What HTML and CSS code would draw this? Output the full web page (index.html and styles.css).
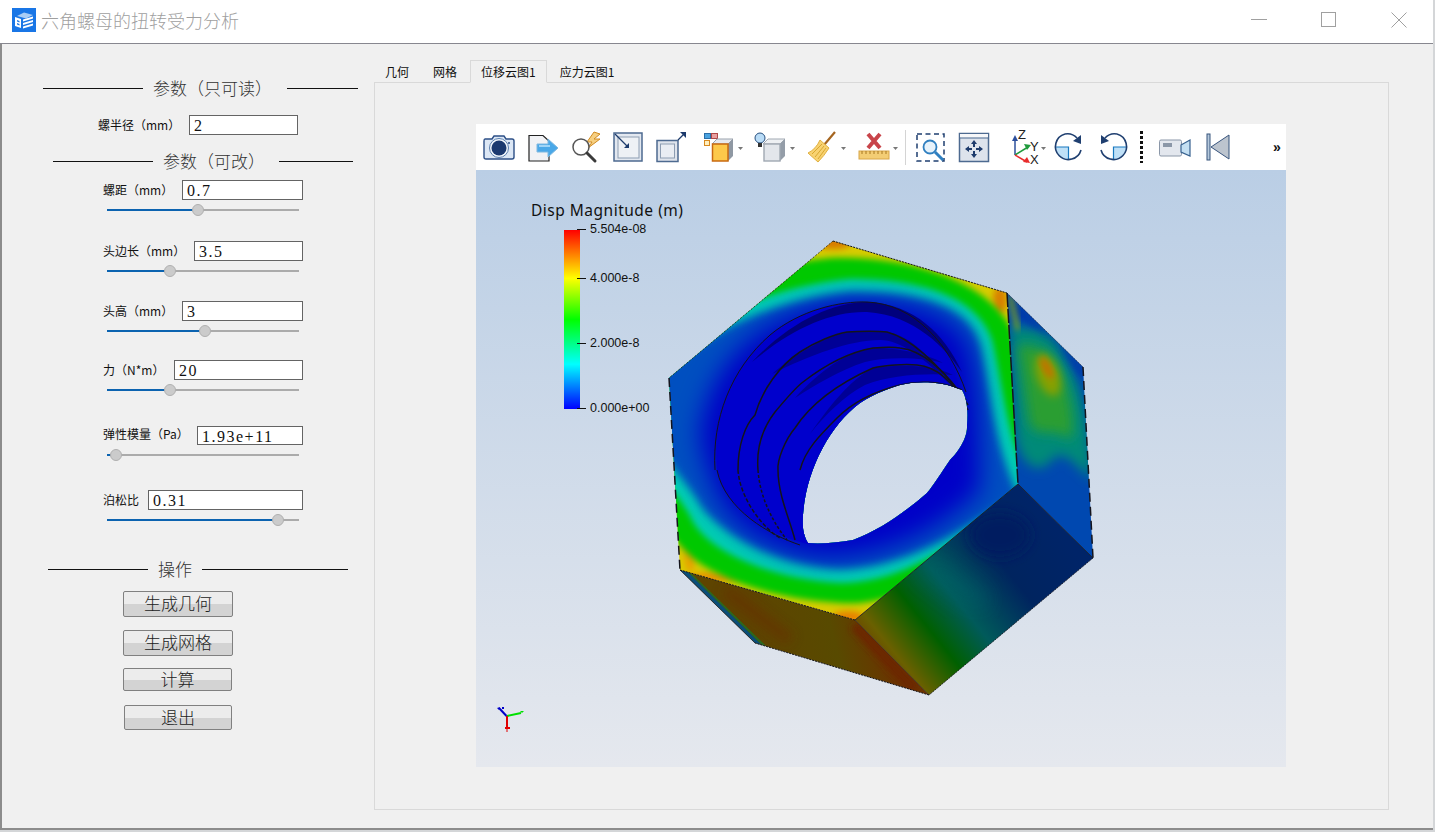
FILE: index.html
```html
<!DOCTYPE html>
<html lang="zh">
<head>
<meta charset="utf-8">
<title>六角螺母的扭转受力分析</title>
<link rel="stylesheet" href="styles.css">
</head>
<body>
<div class="window">
  <header class="titlebar">
    <svg class="app-icon" viewBox="0 0 24 24" width="24" height="24">
      <rect width="24" height="24" fill="#1976e6"/>
      <path d="M5 8 L12 4.5 L21 7 L14 10.5 Z" fill="#a9cdf5"/>
      <path d="M3 9 L9 11 V20 L3 18 Z" fill="#fff"/>
      <path d="M5 12 L7.5 13 V14.5 L5 13.5 Z M5 15 L7.5 16 V17.5 L5 16.5 Z" fill="#1976e6"/>
      <path d="M11 11.5 L21 8.5 V10.5 L11 13.5 Z M11 15 L21 12 V14 L11 17 Z M11 18.5 L21 15.5 V17.5 L11 20.5 Z" fill="#fff"/>
    </svg>
    <span class="title-text">六角螺母的扭转受力分析</span>
    <div class="win-controls">
      <svg class="win-min" width="16" height="16" viewBox="0 0 16 16"><path d="M0 7.5 H16" stroke="#a0a0a0"/></svg>
      <svg class="win-max" width="16" height="16" viewBox="0 0 16 16"><rect x=".5" y=".5" width="14" height="14" fill="none" stroke="#a0a0a0"/></svg>
      <svg class="win-close" width="16" height="16" viewBox="0 0 16 16"><path d="M.5 .5 L15.5 15.5 M15.5 .5 L.5 15.5" stroke="#a0a0a0"/></svg>
    </div>
  </header>
  <main class="content">
    <aside class="panel">
      <div class="section section-a">
        <span class="rule"></span><span class="section-text text-a">参数（只可读）</span><span class="rule rule-a"></span>
      </div>
      <div class="field field-ro">
        <label>螺半径（mm）</label><div class="input w-109">2</div>
      </div>
      <div class="section section-b">
        <span class="rule"></span><span class="section-text text-b">参数（可改）</span><span class="rule rule-b"></span>
      </div>
      <div class="field mt-7">
        <label>螺距（mm）</label><div class="input w-121">0.7</div>
      </div>
      <div class="slider"><div class="fill" style="width:47.4%"><span class="thumb"></span></div></div>
      <div class="field mt-25">
        <label>头边长（mm）</label><div class="input w-109">3.5</div>
      </div>
      <div class="slider"><div class="fill" style="width:32.8%"><span class="thumb"></span></div></div>
      <div class="field mt-24">
        <label>头高（mm）</label><div class="input w-121">3</div>
      </div>
      <div class="slider"><div class="fill" style="width:51%"><span class="thumb"></span></div></div>
      <div class="field mt-23">
        <label>力（N*m）</label><div class="input w-129">20</div>
      </div>
      <div class="slider"><div class="fill" style="width:32.8%"><span class="thumb"></span></div></div>
      <div class="field field-short mt-30">
        <label>弹性模量（Pa）</label><div class="input w-106">1.93e+11</div>
      </div>
      <div class="slider"><div class="fill" style="width:4.7%"><span class="thumb"></span></div></div>
      <div class="field mt-29">
        <label>泊松比</label><div class="input w-155">0.31</div>
      </div>
      <div class="slider"><div class="fill" style="width:89%"><span class="thumb"></span></div></div>
      <div class="section section-c">
        <span class="rule"></span><span class="section-text text-c">操作</span><span class="rule rule-c"></span>
      </div>
      <button class="btn btn-1">生成几何</button>
      <button class="btn btn-2">生成网格</button>
      <button class="btn btn-3">计算</button>
      <button class="btn btn-4">退出</button>
    </aside>
    <section class="workspace">
      <nav class="tabs">
        <span class="tab">几何</span>
        <span class="tab tab-second">网格</span>
        <span class="tab tab-active">位移云图1</span>
        <span class="tab">应力云图1</span>
      </nav>
      <div class="pane">
        <div class="viewer">
          <div class="toolbar">
            <svg class="tool" width="32" height="32" viewBox="0 0 32 32">
              <path d="M2 8 H9 L11 5 H21 L23 8 H29 Q31 8 31 10 V26 Q31 28 29 28 H3 Q1 28 1 26 V10 Q1 8 2 8 Z" fill="#dce7f5" stroke="#2c4f86" stroke-width="1.4"/>
              <circle cx="16" cy="17" r="9.5" fill="#f2f6fb" stroke="#5b7fae"/>
              <circle cx="16" cy="17" r="7.5" fill="#1c3a70"/>
              <circle cx="26" cy="12" r="1" fill="#2c4f86"/>
            </svg>
            <svg class="tool ml-12" width="32" height="32" viewBox="0 0 32 32">
              <path d="M2 4.500 H16 L22 10 V30 H2 Z" fill="#f1f2f5" stroke="#222" stroke-width="1.2"/>
              <path d="M10 13 H21 V8 L31 17 L21 26 V21 H10 Z" fill="#4aa8e8" stroke="#7fb8e0"/>
              <path d="M12 15 H23" stroke="#9ed4f7" stroke-width="2"/>
            </svg>
            <svg class="tool ml-10" width="32" height="32" viewBox="0 0 32 32">
              <path d="M25 1 L18 11 H23 L19 17 L31 8 H25 L31 3 Z" fill="#f6cf80" stroke="#d08a20" stroke-width="1"/>
              <circle cx="12" cy="16" r="8" fill="#fff" fill-opacity=".7" stroke="#555" stroke-width="1.500"/>
              <path d="M18 22 L26 30" stroke="#3a3a3a" stroke-width="3" stroke-linecap="round"/>
            </svg>
            <svg class="tool ml-11" width="32" height="32" viewBox="0 0 32 32">
              <rect x="2" y="2" width="28" height="28" fill="#e3e8f0" stroke="#4d6a90" stroke-width="1.500"/>
              <rect x="6" y="6" width="21" height="21" fill="#eef1f5" stroke="#8d9db2"/>
              <path d="M3 3 L15 15" stroke="#1d3b6c" stroke-width="1.200"/>
              <path d="M12 17 H17 V12 Z" fill="#1d3b6c"/>
            </svg>
            <svg class="tool ml-11" width="32" height="32" viewBox="0 0 32 32">
              <rect x="2" y="9.500" width="21" height="21" fill="#dfe4ec" stroke="#4d6a90" stroke-width="1.500"/>
              <rect x="5.500" y="13" width="14" height="14" fill="#e9edf3" stroke="#8d9db2"/>
              <path d="M23 9 L29 3" stroke="#1d3b6c" stroke-width="1.200"/>
              <path d="M25 1 H31 V7 Z" fill="#1d3b6c"/>
            </svg>
            <svg class="tool ml-16" width="40" height="32" viewBox="0 0 40 32">
              <rect x="1.500" y="2.500" width="6" height="5" fill="#4aa3e0" stroke="#2a6ea8"/>
              <rect x="8.500" y="2.500" width="6" height="5" fill="#e8a0a0" stroke="#b04848"/>
              <rect x="1.500" y="9.500" width="5" height="5" fill="#fff0c0" stroke="#d88a20"/>
              <path d="M9 13 L14 8 H30 L25 13 Z" fill="#e6e9ee" stroke="#9aa3ad"/>
              <path d="M25 13 L30 8 V25 L25 30 Z" fill="#8f98a3"/>
              <rect x="9.500" y="13" width="15.500" height="17" fill="#fdc94a" stroke="#c96a10" stroke-width="1.500"/>
              <path d="M35 16 H40 L37.500 19 Z" fill="#777"/>
            </svg>
            <svg class="tool ml-11" width="40" height="32" viewBox="0 0 40 32">
              <path d="M9 13 L14 8 H31 L26 13 Z" fill="#eef0f3" stroke="#a0a8b2"/>
              <path d="M26 13 L31 8 V25 L26 30 Z" fill="#949da8"/>
              <rect x="10" y="13" width="16" height="17" fill="#e3e6eb" stroke="#a0a8b2" stroke-width="1.400"/>
              <circle cx="6" cy="7" r="5" fill="#b9dcf7" stroke="#28507f"/>
              <rect x="4" y="12" width="4" height="4" fill="#333"/>
              <path d="M36 16 H41 L38.500 19 Z" fill="#777"/>
            </svg>
            <svg class="tool ml-13" width="40" height="32" viewBox="0 0 40 32">
              <path d="M28 1 L17 14" stroke="#a5651f" stroke-width="2.200"/>
              <path d="M13 9 L22 17 Q17 25 11 31 L1 22 Q9 18 13 9 Z" fill="#f8d271" stroke="#e0b040"/>
              <path d="M5 23 L15 13 M8 26 L17 15 M11 28 L19 17" stroke="#d8a830"/>
              <path d="M34 16 H39 L36.500 19 Z" fill="#777"/>
            </svg>
            <svg class="tool ml-11" width="40" height="32" viewBox="0 0 40 32">
              <path d="M10 3 L22 17 M22 3 L10 17" stroke="#c8444a" stroke-width="4"/>
              <rect x="1" y="20" width="30" height="8" fill="#f3cd74" stroke="#d8a648"/>
              <path d="M4 20 v3 M8 20 v3 M12 20 v3 M16 20 v3 M20 20 v3 M24 20 v3 M28 20 v3" stroke="#a87820"/>
              <path d="M35 16 H40 L37.500 19 Z" fill="#777"/>
            </svg>
            <span class="sep"></span>
            <svg class="tool ml-9" width="32" height="32" viewBox="0 0 32 32">
              <rect x="2" y="3" width="27" height="27" fill="none" stroke="#1f3f70" stroke-width="1.500" stroke-dasharray="5 3.500"/>
              <circle cx="15" cy="16" r="6.500" fill="#e6f2fb" stroke="#2f7fc0" stroke-width="1.800"/>
              <path d="M20 21 L28 29" stroke="#2f7fc0" stroke-width="3"/>
            </svg>
            <svg class="tool ml-11" width="32" height="32" viewBox="0 0 32 32">
              <rect x="1.500" y="2.500" width="29" height="28" fill="#dde3ec" stroke="#4d6a90" stroke-width="1.500"/>
              <rect x="2" y="3" width="28" height="3.500" fill="#f6f7f9"/>
              <path d="M2 7 H30" stroke="#4d6a90"/>
              <path d="M16 9 L19 13 H17 V16 H15 V13 H13 Z M16 27 L13 23 H15 V20 H17 V23 H19 Z M7 18 L11 15 V17 H14 V19 H11 V21 Z M25 18 L21 21 V19 H18 V17 H21 V15 Z" fill="#1d3b6c"/>
            </svg>
            <svg class="tool ml-19" width="40" height="32" viewBox="0 0 40 32">
              <path d="M6 24 V9" stroke="#2c4f9c" stroke-width="1.500"/>
              <path d="M3 10 L6 4 L9 10 Z" fill="#2c4f9c"/>
              <path d="M6 24 L19 16" stroke="#1f9a3c" stroke-width="1.500"/>
              <path d="M15 13 L22 14 L18 19 Z" fill="#1f9a3c"/>
              <path d="M6 24 L18 31" stroke="#e82c2c" stroke-width="1.500"/>
              <path d="M14 31 L21 32 L18 26 Z" fill="#e82c2c"/>
              <text class="axis-letter" x="9" y="8">Z</text>
              <text class="axis-letter" x="21" y="20">Y</text>
              <text class="axis-letter" x="21" y="33">X</text>
              <path d="M32 16 H37 L34.500 19 Z" fill="#777"/>
            </svg>
            <svg class="tool ml-4" width="32" height="32" viewBox="0 0 32 32">
              <path d="M2.500 16 A13 13 0 0 0 15.500 29 V16 Z" fill="#bfe0f7"/>
              <path d="M2.500 16 H15.500 V29" fill="none" stroke="#1979c0" stroke-width="1.200"/>
              <path d="M12 3 A13 13 0 1 0 28 19" fill="none" stroke="#1f3f70" stroke-width="1.600"/>
              <path d="M12 3 A13 13 0 0 1 24 7" fill="none" stroke="#1f3f70" stroke-width="1.600"/>
              <path d="M28 4 L28 13 L20 10 Z" fill="#1f3f70"/>
            </svg>
            <svg class="tool ml-12" width="32" height="32" viewBox="0 0 32 32">
              <path d="M29.500 16 A13 13 0 0 1 16.500 29 V16 Z" fill="#bfe0f7"/>
              <path d="M29.500 16 H16.500 V29" fill="none" stroke="#1979c0" stroke-width="1.200"/>
              <path d="M20 3 A13 13 0 1 1 4 19" fill="none" stroke="#1f3f70" stroke-width="1.600"/>
              <path d="M4 4 L4 13 L12 10 Z" fill="#1f3f70"/>
              <path d="M20 3 A13 13 0 0 0 8 7" fill="none" stroke="#1f3f70" stroke-width="1.600"/>
            </svg>
            <span class="sep-dotted"></span>
            <svg class="tool ml-15" width="32" height="32" viewBox="0 0 32 32">
              <rect x="1.500" y="9" width="22" height="16" rx="1.500" fill="#e3e7ee" stroke="#8b97a8"/>
              <rect x="5" y="12" width="9" height="4" fill="#8b97a8"/>
              <path d="M23 14 L32 9 V25 L23 21 Z" fill="#c4dff2" stroke="#37618f" stroke-width="1.200"/>
            </svg>
            <svg class="tool ml-15" width="32" height="32" viewBox="0 0 32 32">
              <rect x="2" y="3" width="3" height="26" fill="#b6c9dc" stroke="#37547d"/>
              <path d="M6 16 L24 4 V28 Z" fill="#bcc4ce" stroke="#37547d"/>
            </svg>
            <span class="more">»</span>
          </div>
          <div class="view3d">
            <svg class="scene" width="810" height="597" viewBox="476 170 810 597">
              <defs>
                <linearGradient id="bar" x1="0" y1="0" x2="0" y2="1">
                  <stop offset="0" stop-color="#ff0000"/>
                  <stop offset=".27" stop-color="#ffff00"/>
                  <stop offset=".5" stop-color="#00ff00"/>
                  <stop offset=".75" stop-color="#00ffff"/>
                  <stop offset="1" stop-color="#0000ff"/>
                </linearGradient>
                <linearGradient id="lowerRight" gradientUnits="userSpaceOnUse" x1="865" y1="660" x2="1045" y2="515">
                  <stop offset="0" stop-color="#6e3400"/>
                  <stop offset=".12" stop-color="#6a6000"/>
                  <stop offset=".3" stop-color="#006000"/>
                  <stop offset=".47" stop-color="#005a5a"/>
                  <stop offset=".72" stop-color="#00245f"/>
                  <stop offset="1" stop-color="#002468"/>
                </linearGradient>
                <linearGradient id="bottomFace" gradientUnits="userSpaceOnUse" x1="760" y1="650" x2="880" y2="620">
                  <stop offset="0" stop-color="#5e4400"/>
                  <stop offset=".6" stop-color="#584a00"/>
                  <stop offset="1" stop-color="#6a3400"/>
                </linearGradient>
                <clipPath id="frontClip">
                  <path clip-rule="evenodd" d="M833 241 L1007 293 L1018 484 L855 620 L680 570 L669 378 Z M900 385 C915 381 940 380 962 390 C968 400 968 415 967 425 C968 440 955 455 950 460 C940 475 930 490 927 493 C905 512 880 530 853 540 C835 543 820 544 808 543 C803 535 802 525 803 515 C806 470 830 425 860 403 C875 393 890 388 900 385 Z"/>
                </clipPath>
                <clipPath id="rightClip"><path d="M1007 293 L1083 367 L1093 558 L1018 484 Z"/></clipPath>
                <clipPath id="bottomClip"><path d="M680 570 L755 643 L929 695 L855 620 Z"/></clipPath>
                <clipPath id="lowerClip"><path d="M1018 484 L1093 558 L929 695 L855 620 Z"/></clipPath>
                <filter id="b7" x="-30%" y="-30%" width="160%" height="160%"><feGaussianBlur stdDeviation="6"/></filter>
                <filter id="b4" x="-30%" y="-30%" width="160%" height="160%"><feGaussianBlur stdDeviation="4"/></filter>
                <filter id="b3" x="-30%" y="-30%" width="160%" height="160%"><feGaussianBlur stdDeviation="3"/></filter>
                <filter id="b10" x="-30%" y="-30%" width="160%" height="160%"><feGaussianBlur stdDeviation="12"/></filter>
              </defs>

              <g clip-path="url(#frontClip)">
                <path d="M660 230 H1030 V640 H660 Z" fill="#d8cc00"/>
                <g filter="url(#b3)">
                  <ellipse cx="833" cy="243" rx="18" ry="6" fill="#d87800"/>
                  <ellipse cx="848" cy="617" rx="16" ry="6" fill="#e88000"/>
                  <ellipse cx="690" cy="552" rx="6" ry="20" fill="#e8a000"/>
                  <ellipse cx="715" cy="577" rx="26" ry="5" fill="#e89000"/>
                  <ellipse cx="1000" cy="300" rx="7" ry="14" fill="#d88000"/>
                </g>
                <path filter="url(#b3)" d="M600 400 C650 300 760 264 830 258 C900 256 985 276 1012 330 L1040 470 C1000 560 900 608 840 603 C780 600 725 582 695 560 C660 530 620 470 600 400 Z" fill="#00c800"/>
                <path filter="url(#b3)" d="M620 400 C680 320 770 287 850 279 C920 279 977 296 992 340 C1002 380 1007 440 1030 482 C960 547 900 583 840 583 C780 580 713 556 693 522 C678 490 640 460 620 400 Z" fill="#00ccb4"/>
                <path filter="url(#b4)" d="M640 400 C680 340 770 300 850 292 C920 292 970 306 980 345 C990 390 993 440 1018 495 C953 538 900 568 840 569 C780 566 727 538 702 508 C687 480 650 450 640 400 Z" fill="#0050c0"/>
                <path filter="url(#b10)" d="M700 430 C715 340 790 304 860 302 C920 302 960 320 970 350 C980 390 980 440 980 490 C940 530 890 555 830 557 C780 555 735 530 718 495 C705 465 700 445 700 430 Z" fill="#0000c8"/>

                <path d="M717 470 C712 420 730 370 770 335 C800 310 840 301 867 302 C915 304 950 345 967 412 L808 544 C770 535 725 510 717 470 Z" fill="#0000cc"/>
                <path d="M752 362 C790 322 830 303 867 302 C915 304 945 335 962 372 C945 348 915 315 867 312 C830 311 790 330 752 362 Z" fill="#00007c"/>
                <path d="M772 374 C800 350 830 335 847 332 C860 331 880 331 887 332 C905 335 925 348 950 385 C925 358 900 340 880 340 C850 340 810 355 772 374 Z" fill="#000096"/>
                <path d="M795 398 C820 370 850 350 873 348 C890 347 925 352 943 363 C925 358 890 356 865 362 C840 370 815 385 795 398 Z" fill="#000096"/>
                <path d="M810 434 C830 405 850 380 873 368 C890 365 930 363 953 375 C925 373 890 375 865 385 C845 395 825 415 810 434 Z" fill="#000096"/>
                <g fill="none" stroke="#14141c" stroke-width="1">
                  <path d="M715 470 C712 420 730 370 770 335 C800 310 840 301 867 302 C915 304 950 345 966 392"/>
                  <path d="M717 470 C725 510 770 535 800 545"/>
                </g>
                <g fill="none" stroke="#14141c" stroke-width="1.500">
                  <path d="M738 470 C738 445 745 425 755 415 C762 390 780 365 800 352 C815 342 835 334 847 332 C860 331 880 331 887 332 C910 338 935 360 966 400"/>
                  <path d="M758 470 C756 445 765 425 775 412 C785 400 795 388 803 382 C825 365 850 352 873 348 C885 347 895 347 900 348 C920 350 945 368 968 405"/>
                  <path d="M778 470 C777 460 785 440 795 428 C810 405 835 385 873 368 C885 365 905 364 917 365 C930 366 950 374 968 410"/>
                  <path d="M800 470 C805 450 820 435 837 418 C855 400 880 390 900 385 C915 381 940 380 962 390"/>
                  <path d="M738 470 C740 500 765 530 780 538" stroke-dasharray="4 2"/>
                  <path d="M758 470 C760 500 775 525 787 540" stroke-dasharray="3 2"/>
                  <path d="M778 470 C778 495 790 520 795 540"/>
                </g>
              </g>

              <g clip-path="url(#rightClip)">
                <path d="M1000 285 H1100 V565 H1000 Z" fill="#0048b0"/>
                <path filter="url(#b7)" d="M1010 325 C1030 330 1048 325 1062 352 C1074 372 1090 400 1092 480 C1075 465 1062 445 1050 462 C1038 475 1022 465 1016 440 Z" fill="#008a78"/>
                <path filter="url(#b7)" d="M1018 345 C1032 345 1050 345 1062 375 C1072 400 1076 430 1070 440 C1055 425 1040 440 1030 425 Z" fill="#2a9e30"/>
                <ellipse cx="1048" cy="375" rx="11" ry="22" transform="rotate(-20 1048 375)" fill="#88a000" filter="url(#b4)"/>
                <ellipse cx="1047" cy="368" rx="4" ry="12" transform="rotate(-28 1047 368)" fill="#c47000" filter="url(#b3)"/>
                <path filter="url(#b3)" d="M1007 293 L1083 367 L1084 382 L1055 338 L1015 316 Z" fill="#0038a8"/>
                <path filter="url(#b3)" d="M1010 296 L1018 330" stroke="#90b000" stroke-width="4" fill="none"/>
              </g>

              <g clip-path="url(#lowerClip)">
                <path d="M850 480 H1095 V700 H850 Z" fill="url(#lowerRight)"/>
                <path filter="url(#b10)" d="M925 560 L985 605" stroke="#007070" stroke-width="16" fill="none" opacity=".55"/>
                <ellipse cx="1000" cy="535" rx="30" ry="22" fill="#001e60" filter="url(#b7)"/>
              </g>

              <g clip-path="url(#bottomClip)">
                <path d="M670 565 H935 V700 H670 Z" fill="url(#bottomFace)"/>
                <path filter="url(#b7)" d="M725 590 L790 640" stroke="#6a2a00" stroke-width="12" fill="none" opacity=".5"/>
                <path filter="url(#b3)" d="M855 625 L915 690" stroke="#6c2800" stroke-width="12" fill="none"/>
                <path d="M680 570 L688 572 L762 645 L755 643 Z" fill="#0a4e78"/>
                <path d="M688 572 L692 574 L766 646 L762 645 Z" fill="#2a6a20"/>
              </g>

              <g fill="none" stroke="#14141c">
                <path d="M833 241 L1007 293" stroke-dasharray="2 1"/>
                <path d="M833 241 L669 378" stroke-dasharray="2 1.500" stroke-opacity=".7"/>
                <path d="M669 378 L680 570" stroke-width="1.500" stroke-dasharray="9 5"/>
                <path d="M680 570 L855 620" stroke-dasharray="2 1"/>
                <path d="M855 620 L1018 484" stroke-opacity=".8"/>
                <path d="M1007 293 L1018 484" stroke-width="1.500" stroke-dasharray="14 2"/>
                <path d="M1007 293 L1083 367" stroke-opacity=".5" stroke-dasharray="2 1"/>
                <path d="M1083 367 L1093 558" stroke-width="1.500" stroke-dasharray="9 5"/>
                <path d="M1018 484 L1093 558" stroke-opacity=".8"/>
                <path d="M1093 558 L929 695" stroke-dasharray="2 1" stroke-opacity=".8"/>
                <path d="M929 695 L755 643" stroke-dasharray="2 1"/>
                <path d="M855 620 L929 695" stroke-opacity=".5"/>
                <path d="M680 570 L755 643" stroke-opacity=".7"/>
              </g>

              <text class="bar-title" x="531" y="216">Disp Magnitude (m)</text>
              <rect x="564" y="230" width="16" height="179" fill="url(#bar)"/>
              <path d="M577 229.500 H586 M577 278.500 H586 M577 343.500 H586 M577 408.500 H586" stroke="#111"/>
              <text class="bar-label" x="590" y="233">5.504e-08</text>
              <text class="bar-label" x="590" y="282">4.000e-8</text>
              <text class="bar-label" x="590" y="347">2.000e-8</text>
              <text class="bar-label" x="590" y="412">0.000e+00</text>

              <path d="M506.500 716 L499 708" stroke="#0000c8" stroke-width="2"/>
              <path d="M497 708 L500 707 L499 710 Z M502 707 H504 V709 H502 Z" fill="#0000c8"/>
              <path d="M507 716 L521 713" stroke="#00e000" stroke-width="2"/>
              <path d="M520 711 L524 711 L522 713 Z" fill="#00e000"/>
              <path d="M507 716 V728" stroke="#e00000" stroke-width="2"/>
              <path d="M505 727 H510 V729 H507.500 V732 H506.500 V729 H505 Z" fill="#e00000"/>
            </svg>
          </div>
        </div>
      </div>
    </section>
  </main>
</div>
</body>
</html>
```

FILE: styles.css
```css
* { box-sizing: border-box; }
html, body { margin: 0; padding: 0; height: 100%; overflow: hidden; }
body {
  background: #d4d6d8;
  font-family: "Noto Sans CJK SC", "Liberation Sans", sans-serif;
}
.window {
  width: 1433px;
  height: 830px;
  display: flex;
  flex-direction: column;
  background: #f0f0f0;
  border-left: 2px solid #8c8c8c;
  border-bottom: 2px solid #8c8c8c;
}
.titlebar {
  height: 44px;
  flex: none;
  display: flex;
  align-items: center;
  margin-left: -2px;
  padding: 0 26px 4px 12px;
  background: #fff;
  border-bottom: 1px solid #87878f;
}
.app-icon { flex: none; }
.title-text {
  margin-left: 5px;
  font-size: 18px;
  font-weight: 300;
  color: #9f9f9f;
  line-height: 24px;
  white-space: nowrap;
}
.win-controls {
  margin-left: auto;
  display: flex;
  align-items: center;
}
.win-controls svg { display: block; }
.win-max { margin-left: 54px; }
.win-close { margin-left: 54px; }

.content { flex: 1; display: flex; min-height: 0; }
.panel {
  width: 372px;
  flex: none;
  padding-top: 32px;
  display: flex;
  flex-direction: column;
  align-items: flex-start;
}
.section {
  height: 24px;
  display: flex;
  align-items: center;
  flex: none;
}
.section-a { margin-left: 41px; }
.section-b { margin-left: 51px; margin-top: 14px; }
.section-c { margin-left: 46px; margin-top: 31px; }
.rule { width: 100px; height: 1px; background: #111; flex: none; }
.rule-a { width: 71px; }
.rule-b { width: 74px; }
.rule-c { width: 146px; }
.section-text {
  margin-left: 10px;
  font-size: 17px;
  line-height: 24px;
  font-weight: 300;
  color: #333;
  white-space: nowrap;
}
.text-a { margin-right: 15px; }
.text-b { margin-right: 14px; }
.text-c { margin-right: 10px; }

.field {
  width: 200px;
  height: 20px;
  margin-left: 101px;
  display: flex;
  align-items: center;
  justify-content: space-between;
  flex: none;
}
.field label {
  font-size: 12px;
  line-height: 16px;
  color: #111;
  white-space: nowrap;
}
.field-ro { margin-left: 96px; margin-top: 15px; }
.field-short { height: 19px; }
.field-short .input { height: 19px; line-height: 19px; }
.field-short label { margin-top: -3px; }
.mt-7 { margin-top: 7px; }
.mt-23 { margin-top: 23px; }
.mt-24 { margin-top: 24px; }
.mt-25 { margin-top: 25px; }
.mt-29 { margin-top: 29px; }
.mt-30 { margin-top: 30px; }
.input {
  height: 20px;
  flex: none;
  background: #fff;
  border: 1px solid #646464;
  padding: 0 0 0 4px;
  font-family: "Liberation Serif", serif;
  font-size: 16px;
  letter-spacing: 1.5px;
  line-height: 20px;
  color: #111;
  white-space: nowrap;
}
.w-106 { width: 106px; }
.w-109 { width: 109px; }
.w-121 { width: 121px; }
.w-129 { width: 129px; }
.w-155 { width: 155px; }

.slider {
  width: 192px;
  height: 12px;
  margin: 4px 0 0 105px;
  position: relative;
  flex: none;
  background: linear-gradient(#ababab, #ababab) center / 100% 2px no-repeat;
}
.fill {
  height: 2px;
  margin-top: 5px;
  position: relative;
  background: #0b63b0;
}
.thumb {
  position: absolute;
  right: -6px;
  top: -5px;
  width: 12px;
  height: 12px;
  border-radius: 50%;
  background: #cbcbcb;
  border: 1px solid #b0b0b0;
}

.btn {
  display: block;
  flex: none;
  padding: 0 0 2px;
  font-family: inherit;
  font-size: 17px;
  font-weight: 300;
  line-height: 20px;
  color: #222;
  border: 1px solid #808080;
  border-radius: 2px;
  background: linear-gradient(#ececec 50%, #d3d3d3 50%);
}
.btn-1 { width: 110px; height: 26px; margin: 10px 0 0 121px; }
.btn-2 { width: 110px; height: 26px; margin: 13px 0 0 121px; }
.btn-3 { width: 109px; height: 23px; margin: 12px 0 0 121px; }
.btn-4 { width: 108px; height: 25px; margin: 14px 0 0 122px; }

.workspace { flex: 1; display: flex; flex-direction: column; padding: 15px 44px 18px 0; min-width: 0; }
.tabs { height: 23px; display: flex; flex: none; position: relative; z-index: 1; align-items: flex-end; }
.tab {
  height: 22px;
  padding: 0 11px;
  font-size: 12px;
  line-height: 22px;
  color: #111;
  white-space: nowrap;
  margin-bottom: -1px;
}
.tab-second { margin-left: 2px; }
.tab-active {
  height: 23px;
  padding: 0 10px;
  margin-left: 2px;
  margin-right: 2px;
  background: #f0f0f0;
  border: 1px solid #d9d9d9;
  border-bottom: 1px solid #f0f0f0;
}
.pane {
  flex: 1;
  border: 1px solid #d9d9d9;
  padding: 41px 0 0 101px;
  min-height: 0;
}
.viewer { width: 810px; height: 643px; display: flex; flex-direction: column; }
.toolbar {
  height: 46px;
  flex: none;
  background: #fff;
  display: flex;
  align-items: center;
  padding-left: 7px;
}
.tool { flex: none; display: block; overflow: visible; }
.ml-4 { margin-left: 4px; }
.ml-9 { margin-left: 9px; }
.ml-10 { margin-left: 10px; }
.ml-11 { margin-left: 11px; }
.ml-12 { margin-left: 12px; }
.ml-13 { margin-left: 13px; }
.ml-15 { margin-left: 15px; }
.ml-16 { margin-left: 16px; }
.ml-19 { margin-left: 19px; }
.sep { width: 1px; height: 35px; margin-left: 7px; background: #d4d4d4; flex: none; }
.sep-dotted {
  width: 3px;
  height: 32px;
  margin-left: 11px;
  flex: none;
  background: repeating-linear-gradient(#111 0 3px, transparent 3px 5px);
}
.more {
  margin-left: 36px;
  font-family: "Liberation Sans", sans-serif;
  font-size: 14px;
  font-weight: 700;
  color: #111;
}
.view3d {
  flex: 1;
  background: linear-gradient(#bacee5, #e5e8ee);
}
.scene { display: block; }
.axis-letter {
  font-family: "Liberation Sans", sans-serif;
  font-size: 13px;
  fill: #222;
}
.bar-title {
  font-family: "Noto Sans", sans-serif;
  font-size: 15.5px;
  letter-spacing: 0.5px;
  fill: #111;
}
.bar-label {
  font-family: "Liberation Sans", sans-serif;
  font-size: 12.5px;
  fill: #111;
}
```
